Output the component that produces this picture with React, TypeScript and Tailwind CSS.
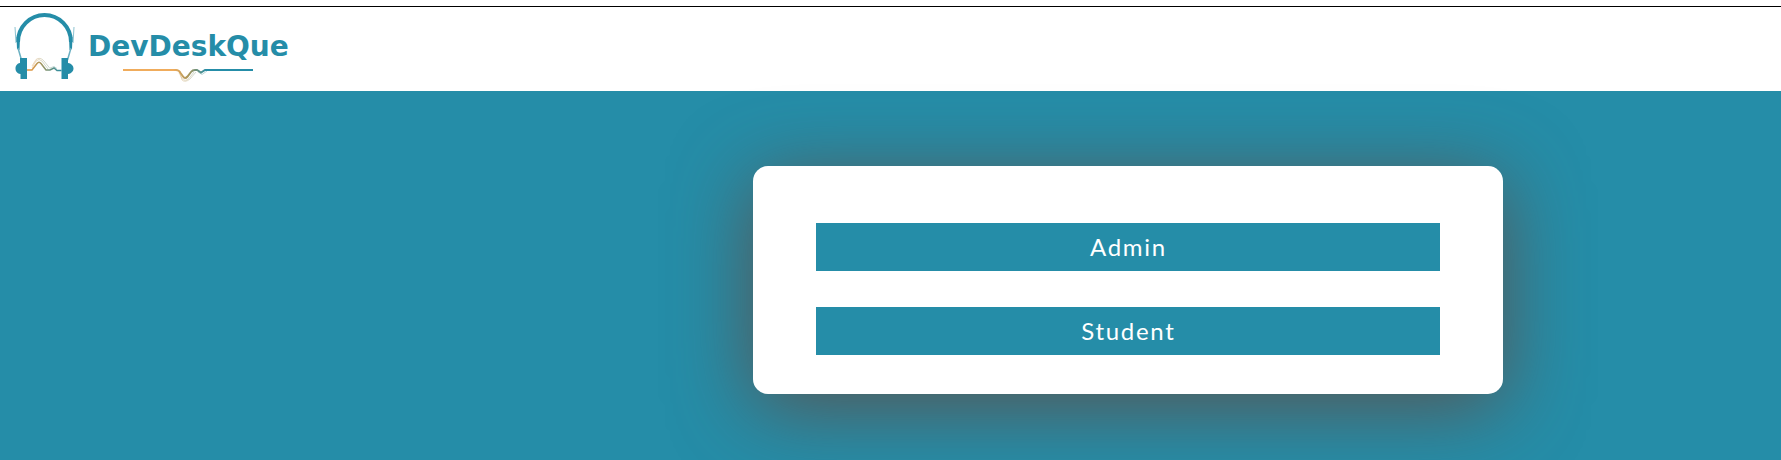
import React from "react";

function HeadphonesMark() {
  return (
    <svg width="62" height="68" viewBox="0 0 62 68" fill="none" aria-hidden="true">
      <defs>
        <linearGradient id="wave" x1="12" y1="0" x2="48" y2="0" gradientUnits="userSpaceOnUse">
          <stop offset="0" stopColor="#e8963a" />
          <stop offset="0.2" stopColor="#d89848" />
          <stop offset="0.5" stopColor="#8f9468" />
          <stop offset="1" stopColor="#258da8" />
        </linearGradient>
      </defs>
      <path d="M4 29A26.500 27 0 0 1 57 29" stroke="#258da8" strokeWidth="4" />
      <path d="M2.500 24L6 24L5.500 37L3 36ZM58.500 24L55 24L55.500 37L58 36Z" fill="#258da8" />
      <path d="M1 14L2 30M60 14L59 30" stroke="#8cc3d1" strokeWidth="1" />
      <path d="M4 35L7.500 47M57 35L53.500 47" stroke="#6bb0c2" strokeWidth="1.500" />
      <path d="M6 45H13V66H6.500V61C2.500 60.500 1.500 57.500 1.500 55.500S2.500 50.500 6 50Z" fill="#258da8" />
      <path d="M54 45H47.500V66H54V61C58 60.500 59.500 57.500 59.500 55.500S58 50.500 54 50Z" fill="#258da8" />
      <path d="M13 57H18L23 50.500Q25 48 27 50.500L32 57H36L40 55L43 57.500H47.500" stroke="url(#wave)" strokeWidth="1.500" />
      <path d="M18 55L22 48Q25 45 28 48L34 56M18 53L22 46.500Q26 43.500 30 48L36 55.500M36 55L40 53.500L43 55.500" stroke="url(#wave)" strokeWidth="0.600" opacity="0.6" />
    </svg>
  );
}

function Underline() {
  return (
    <svg width="130" height="16" viewBox="0 0 130 16" fill="none" aria-hidden="true">
      <defs>
        <linearGradient id="rule" x1="50" y1="0" x2="84" y2="0" gradientUnits="userSpaceOnUse">
          <stop offset="0" stopColor="#f0ac5c" />
          <stop offset="0.45" stopColor="#a8955a" />
          <stop offset="1" stopColor="#258da8" />
        </linearGradient>
      </defs>
      <path d="M0 3H53Q56 3 57.500 6L60 9.500Q62 12.500 64.500 9.500L68 5Q69.500 3 72 3H74L78 5.500L82 3H130" stroke="url(#rule)" strokeWidth="2" />
      <path d="M56 6L59 11.500Q62 15 66 11.500L71 5M57 6L59 13Q62 16 67 12L73 5M75 5L79 7.500L84 4" stroke="url(#rule)" strokeWidth="0.500" opacity="0.7" />
    </svg>
  );
}

function RoleButton({ children }: { children: React.ReactNode }) {
  return (
    <button type="button" className="h-12 w-full bg-[#258da8] text-2xl tracking-[0.07em] text-white">
      {children}
    </button>
  );
}

export default function App() {
  return (
    <div className="flex min-h-screen flex-col bg-[#258da8] font-['Lato',sans-serif]">
      <header className="bg-white pt-1.5">
        <div className="border-t border-black">
          <a href="#" className="flex h-21 w-fit items-start gap-3 pl-3.5 pt-1.5 text-[#258da8]">
            <HeadphonesMark />
            <span className="flex flex-col items-center gap-1 pt-[18px]">
              <span className="font-['DejaVu_Sans',sans-serif] text-[28px] font-bold leading-8">DevDeskQue</span>
              <Underline />
            </span>
          </a>
        </div>
      </header>
      <main className="flex flex-1 items-start pb-16 pl-[42.3%] pt-[75px]">
        <section className="relative flex w-[750px] max-w-full flex-col gap-9 rounded-[15px] bg-white px-[63px] pb-[39px] pt-[57px] shadow-[0_13px_80px_rgba(101,71,62,0.8)]">
          <RoleButton>Admin</RoleButton>
          <RoleButton>Student</RoleButton>
        </section>
      </main>
    </div>
  );
}
